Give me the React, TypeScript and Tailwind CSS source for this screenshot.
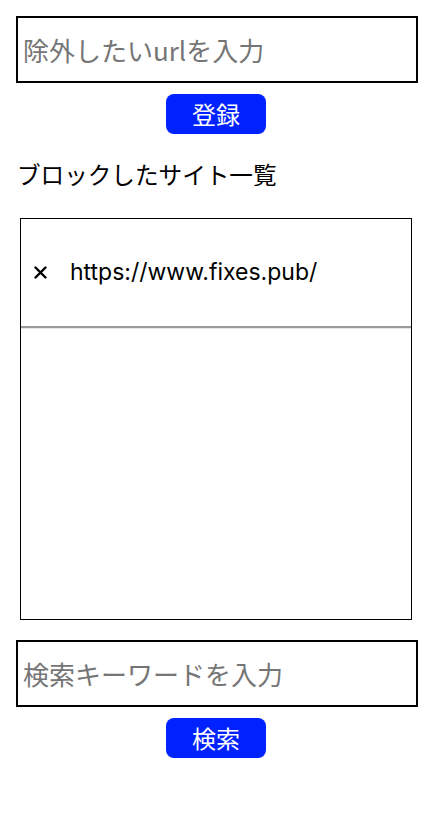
import { useState } from 'react'

const jp = { fontFamily: '"Noto Sans CJK JP", "Noto Sans", sans-serif' }

function App() {
  const [url, setUrl] = useState('')
  const [keyword, setKeyword] = useState('')
  const [sites, setSites] = useState<string[]>(['https://www.fixes.pub/'])

  const addSite = () => {
    if (!url) return
    setSites([...sites, url])
    setUrl('')
  }

  return (
    <div className="p-4 bg-white min-h-[830px]" style={jp}>
      <input
        type="text"
        value={url}
        onChange={(e) => setUrl(e.target.value)}
        placeholder="除外したいurlを入力"
        className="block w-[402px] h-[67px] border-2 border-black px-[5px] text-[26px] text-black placeholder:text-[#757575] outline-none"
      />
      <button
        onClick={addSite}
        className="block mx-auto mt-[11px] w-[100px] h-10 rounded-lg bg-[#0022ff] text-white text-[24px] leading-none"
      >
        登録
      </button>

      <h2 className="mt-[24px] ml-[1px] text-[23.6px] leading-8 text-black">ブロックしたサイト一覧</h2>

      <div className="mt-[28px] ml-1 w-[392px] h-[402px] border border-black">
        {sites.map((site) => (
          <div key={site}>
            <div className="h-[107px] flex items-center pl-3 gap-[23px]">
              <button onClick={() => setSites(sites.filter((s) => s !== site))} className="w-[14px] h-[14px] flex items-center justify-center">
                <svg width="13" height="13" viewBox="0 0 13 13">
                  <path d="M1.5 1.5 L11.5 11.5 M11.5 1.5 L1.5 11.5" stroke="#000" strokeWidth="2.4" strokeLinecap="round" />
                </svg>
              </button>
              <span className="text-[23px] text-black" style={{ fontFamily: 'Inter, "Liberation Sans", sans-serif' }}>
                {site}
              </span>
            </div>
            <div className="border-t-2 border-[#9a9a9a] border-b border-b-[#e8e8e8]" />
          </div>
        ))}
      </div>

      <input
        type="text"
        value={keyword}
        onChange={(e) => setKeyword(e.target.value)}
        placeholder="検索キーワードを入力"
        className="block mt-5 w-[402px] h-[67px] border-2 border-black px-[5px] text-[26px] text-black placeholder:text-[#757575] outline-none"
      />
      <button className="block mx-auto mt-[11px] w-[100px] h-10 rounded-lg bg-[#0022ff] text-white text-[24px] leading-none">
        検索
      </button>
    </div>
  )
}

export default App
